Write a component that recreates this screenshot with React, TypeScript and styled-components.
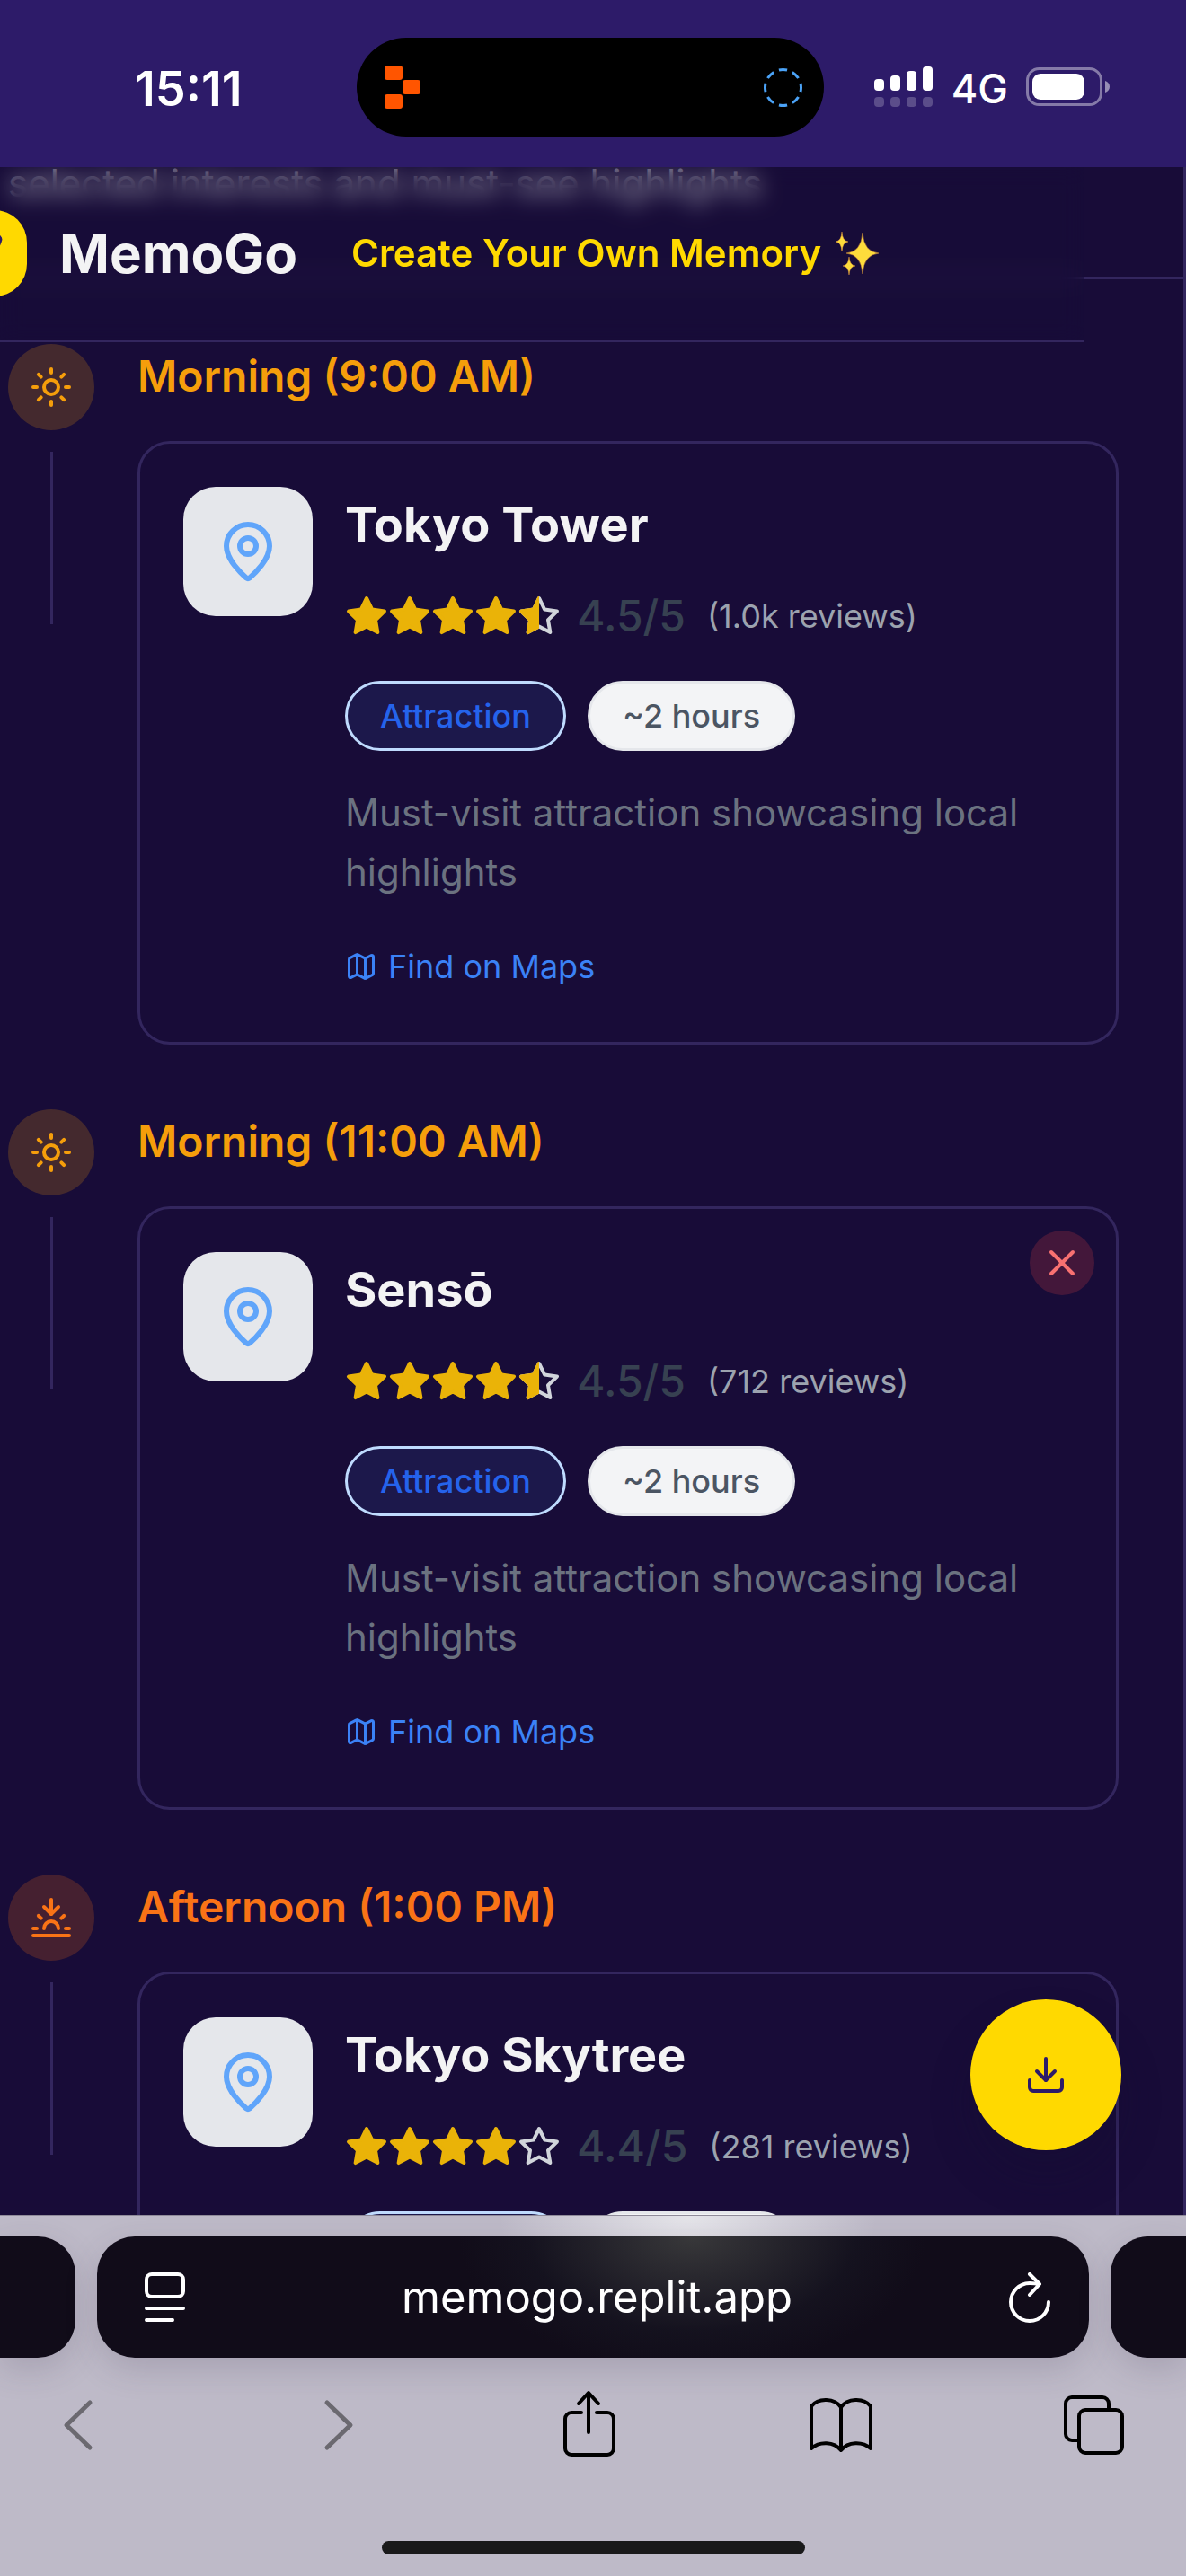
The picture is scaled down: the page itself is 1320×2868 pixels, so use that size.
import React from "react";
import styled, { createGlobalStyle } from "styled-components";
import { Download, Map as MapIcon, MapPin, Sun, Sunset, X } from "lucide-react";

const colors = {
  bar: "#2d1b69",
  page: "#180c38",
  line: "#33265e",
  text: "#f3f3f4",
  yellow: "#ffd900",
  amber: "#f59e0b",
  orange: "#f97316",
  star: "#eab308",
  starEmpty: "#d1d5db",
  chrome: "#bebac8",
  pill: "#110c19",
};

const GlobalStyle = createGlobalStyle`
  *, *::before, *::after { box-sizing: border-box; }
  body {
    margin: 0;
    background: ${colors.page};
    font-family: Inter, "Liberation Sans", sans-serif;
    -webkit-font-smoothing: antialiased;
  }
  h1, h2, h3, p { margin: 0; }
  button { font: inherit; border: 0; padding: 0; background: none; cursor: pointer; }
  svg { display: block; flex: none; }
`;

const Screen = styled.div`
  display: flex;
  flex-direction: column;
  height: 100vh;
  overflow: hidden;
  background: ${colors.page};
`;

/* ---------- status bar ---------- */

const StatusBar = styled.div`
  display: grid;
  grid-template-columns: 1fr 520px 1fr;
  align-items: center;
  flex: none;
  padding: 42px 84px 34px 78px;
  background: ${colors.bar};
  color: #fff;
`;

const Clock = styled.time`
  padding: 3px 0 0 72px;
  font-size: 54px;
  line-height: 60px;
  font-weight: 600;
`;

const Island = styled.div`
  display: flex;
  align-items: center;
  justify-content: space-between;
  height: 110px;
  padding: 0 24px 0 30px;
  border-radius: 55px;
  background: #000;
`;

const StatusIcons = styled.div`
  display: flex;
  align-items: center;
  justify-content: flex-end;
  gap: 20px;
`;

const Network = styled.span`
  padding-top: 3px;
  font-size: 45px;
  line-height: 54px;
  font-weight: 500;
`;

/* ---------- page header ---------- */

const Viewport = styled.main`
  position: relative;
  flex: 1;
  min-height: 0;
  overflow: hidden;
`;

const Header = styled.header`
  position: absolute;
  top: 0;
  left: 0;
  right: 114px;
  z-index: 2;
  display: flex;
  align-items: center;
  height: 195px;
  border-bottom: 3px solid ${colors.line};
  background: rgba(24, 12, 56, 0.3);
  backdrop-filter: blur(12px);
  overflow: hidden;
`;

const Logo = styled.div`
  flex: none;
  width: 96px;
  height: 96px;
  margin-left: -66px;
  border-radius: 36px;
  background: ${colors.yellow};
  overflow: hidden;
`;

const Brand = styled.h1`
  margin-left: 36px;
  font-size: 60px;
  line-height: 84px;
  font-weight: 700;
  color: ${colors.text};
`;

const Tagline = styled.p`
  display: flex;
  align-items: center;
  gap: 15px;
  margin-left: 60px;
  font-size: 42px;
  line-height: 60px;
  font-weight: 600;
  color: ${colors.yellow};
  white-space: nowrap;
`;

/* ---------- itinerary ---------- */

const DayCard = styled.section`
  border-right: 3px solid ${colors.line};
`;

const DayIntro = styled.div`
  height: 125px;
  padding-left: 9px;
  border-bottom: 3px solid ${colors.line};
  font-size: 42px;
  line-height: 36px;
  color: #e5e7eb;
`;

const Timeline = styled.div`
  display: flex;
  flex-direction: column;
  gap: 72px;
  padding: 72px 72px 72px 9px;
`;

const Row = styled.article`
  display: flex;
  gap: 48px;
`;

const Rail = styled.div`
  display: flex;
  flex-direction: column;
  align-items: center;
  gap: 24px;
  flex: none;
  width: 96px;
`;

const Period = styled.div<{ $tone: "amber" | "orange" }>`
  display: grid;
  place-items: center;
  width: 96px;
  height: 96px;
  border-radius: 50%;
  color: ${(p) => (p.$tone === "amber" ? colors.amber : colors.orange)};
  background: ${(p) =>
    p.$tone === "amber" ? "rgba(245, 158, 11, 0.2)" : "rgba(249, 115, 22, 0.2)"};
`;

const Connector = styled.div`
  width: 3px;
  height: 192px;
  background: ${colors.line};
`;

const Stop = styled.div`
  flex: 1;
  min-width: 0;
`;

const Time = styled.h2<{ $tone: "amber" | "orange" }>`
  margin-bottom: 36px;
  font-size: 48px;
  line-height: 72px;
  font-weight: 600;
  color: ${(p) => (p.$tone === "amber" ? colors.amber : colors.orange)};
`;

const Card = styled.div`
  position: relative;
  display: flex;
  align-items: flex-start;
  gap: 36px;
  padding: 48px;
  border: 3px solid ${colors.line};
  border-radius: 36px;
`;

const Thumb = styled.div`
  display: grid;
  place-items: center;
  flex: none;
  width: 144px;
  height: 144px;
  border-radius: 36px;
  background: #e5e7eb;
  color: #60a5fa;
`;

const Info = styled.div`
  flex: 1;
  min-width: 0;
`;

const Name = styled.h3`
  font-size: 54px;
  line-height: 84px;
  font-weight: 700;
  color: ${colors.text};
`;

const Rating = styled.div`
  display: flex;
  align-items: center;
  margin: 24px 0 36px;
`;

const Stars = styled.div`
  display: flex;
`;

const Score = styled.span`
  margin-left: 18px;
  font-size: 48px;
  line-height: 72px;
  font-weight: 500;
  color: #374151;
`;

const Reviews = styled.span`
  margin-left: 24px;
  font-size: 36px;
  line-height: 48px;
  color: #9ca3af;
`;

const Tags = styled.div`
  display: flex;
  gap: 24px;
  margin-bottom: 36px;
`;

const Tag = styled.span<{ $kind: "type" | "length" }>`
  padding: 12px 36px;
  border: 3px solid ${(p) => (p.$kind === "type" ? "#bfdbfe" : "#e5e7eb")};
  border-radius: 39px;
  background: ${(p) => (p.$kind === "type" ? "#1c184b" : "#f3f4f6")};
  color: ${(p) => (p.$kind === "type" ? "#2563eb" : "#4b5563")};
  font-size: 36px;
  line-height: 48px;
  font-weight: 500;
`;

const Summary = styled.p`
  margin-bottom: 36px;
  font-size: 42px;
  line-height: 66px;
  color: #6b7280;
`;

const MapLink = styled.a`
  display: inline-flex;
  align-items: center;
  gap: 12px;
  padding: 12px 0;
  vertical-align: top;
  font-size: 36px;
  line-height: 48px;
  color: #3b82f6;
  text-decoration: none;
`;

const Remove = styled.button`
  position: absolute;
  top: 24px;
  right: 24px;
  display: grid;
  place-items: center;
  width: 72px;
  height: 72px;
  border-radius: 50%;
  background: rgba(239, 68, 68, 0.2);
  color: #f87171;
`;

const SaveButton = styled.button`
  position: absolute;
  right: 72px;
  bottom: 72px;
  display: grid;
  place-items: center;
  width: 168px;
  height: 168px;
  border-radius: 50%;
  background: ${colors.yellow};
  color: ${colors.bar};
  box-shadow: 0 30px 45px rgba(20, 12, 50, 0.3);
`;

/* ---------- browser chrome ---------- */

const Browser = styled.footer`
  flex: none;
  padding: 23px 0 24px;
  border-top: 1px solid #8f8b99;
  background:
    radial-gradient(ellipse 210px 120px at 58% 0, rgba(234, 234, 238, 0.9), rgba(234, 234, 238, 0)),
    ${colors.chrome};
`;

const TabStrip = styled.div`
  display: flex;
  gap: 24px;
`;

const SideTab = styled.div<{ $side: "left" | "right" }>`
  flex: none;
  width: 84px;
  background: ${colors.pill};
  border-radius: ${(p) => (p.$side === "left" ? "0 42px 42px 0" : "42px 0 0 42px")};
  box-shadow: 0 12px 36px rgba(60, 50, 80, 0.18);
`;

const AddressBar = styled.div`
  display: flex;
  align-items: center;
  justify-content: space-between;
  flex: 1;
  height: 135px;
  padding: 0 42px 0 53px;
  border-radius: 42px;
  background:
    radial-gradient(ellipse 260px 150px at 60% 0, rgba(56, 56, 58, 1), rgba(24, 24, 36, 0.5) 70%, rgba(17, 12, 25, 0)),
    ${colors.pill};
  box-shadow: 0 12px 36px rgba(60, 50, 80, 0.18);
  color: #fff;
`;

const Address = styled.span`
  font-size: 49px;
  line-height: 60px;
`;

const Toolbar = styled.nav`
  display: flex;
  justify-content: space-between;
  padding: 27px 66px 0 51px;
`;

const Tool = styled.button`
  width: 72px;
  height: 96px;
  color: #000;
  &:disabled {
    color: #6b6970;
  }
`;

const HomeIndicator = styled.div`
  width: 471px;
  height: 15px;
  margin: 81px auto 0;
  border-radius: 8px;
  background: #1a1a1b;
`;

/* ---------- drawings ---------- */

const STAR =
  "12 2 15.09 8.26 22 9.27 17 14.14 18.18 21.02 12 17.77 5.82 21.02 7 14.14 2 9.27 8.91 8.26";

function Star({ fill }: { fill: number }) {
  return (
    <svg width="48" height="48" viewBox="0 0 24 24" strokeWidth="2" strokeLinejoin="round">
      {fill < 1 && <polygon points={STAR} fill="none" stroke={colors.starEmpty} />}
      {fill > 0 && (
        <svg x="0" y="0" width={24 * fill} height="24" viewBox={`0 0 ${24 * fill} 24`}>
          <polygon points={STAR} fill={colors.star} stroke={colors.star} />
        </svg>
      )}
    </svg>
  );
}

function ReplitMark() {
  return (
    <svg width="42" height="50" viewBox="0 0 42 50" fill="#ff5500">
      <rect x="1" y="1" width="20" height="16" rx="3" />
      <rect x="21" y="17" width="20" height="16" rx="3" />
      <rect x="1" y="33" width="20" height="16" rx="3" />
    </svg>
  );
}

function DashedRing() {
  return (
    <svg width="43" height="43" viewBox="0 0 43 43" fill="none">
      <circle
        cx="21.5"
        cy="21.5"
        r="20"
        stroke="#4ba3f7"
        strokeWidth="3"
        pathLength="80"
        strokeDasharray="6 4"
        strokeDashoffset="3"
      />
    </svg>
  );
}

function Signal() {
  const bars = [14, 10, 5, 0];
  return (
    <svg width="66" height="46" viewBox="0 0 66 46" fill="#fff">
      {bars.map((top, i) => (
        <g key={i}>
          <rect x={i * 18} y={top} width="11" height={27 - top} rx="4" />
          <rect x={i * 18} y="34" width="11" height="11" rx="4" opacity="0.22" />
        </g>
      ))}
    </svg>
  );
}

function Battery() {
  return (
    <svg width="94" height="44" viewBox="0 0 94 44">
      <rect x="1.5" y="1.5" width="82" height="40" rx="13" fill="none" stroke="#fff" strokeOpacity="0.42" strokeWidth="3" />
      <rect x="7" y="7" width="58" height="29" rx="9" fill="#fff" />
      <path d="M88 15c3 1 5 3.500 5 6.500s-2 5.500-5 6.500z" fill="#fff" opacity="0.5" />
    </svg>
  );
}

function Sparkles() {
  const spark = (x: number, y: number, w: number, h: number) => {
    const a = w * 0.08;
    const b = h * 0.06;
    return `M${x} ${y - h}Q${x + a} ${y - b} ${x + w} ${y}Q${x + a} ${y + b} ${x} ${y + h}Q${x - a} ${y + b} ${x - w} ${y}Q${x - a} ${y - b} ${x} ${y - h}Z`;
  };
  return (
    <svg width="51" height="60" viewBox="0 0 51 60" fill="#fddc3c" stroke="#e79a3c" strokeWidth="0.5">
      <path d={spark(31, 30, 18, 23)} />
      <path d={spark(8, 17, 7, 11)} />
      <path d={spark(16, 44, 7, 10)} />
    </svg>
  );
}

function ReaderIcon() {
  return (
    <svg width="46" height="56" viewBox="0 0 46 56" fill="none" stroke="#fff" strokeWidth="4" strokeLinecap="round">
      <rect x="2" y="2" width="41" height="25" rx="6" />
      <path d="M2 40h41M2 53h29" />
    </svg>
  );
}

function ReloadIcon() {
  return (
    <svg width="48" height="56" viewBox="0 0 48 56" fill="none" stroke="#fff" strokeWidth="4" strokeLinecap="round" strokeLinejoin="round">
      <path d="M34 13.500C31 12 28 12 24 12A21 21 0 0 0 3 33a21 21 0 0 0 42 0" />
      <path d="M24 2 35 13 24 25" />
    </svg>
  );
}

const toolSvg = {
  width: 72,
  height: 96,
  viewBox: "0 0 72 96",
  fill: "none",
  stroke: "currentColor",
  strokeWidth: 4,
  strokeLinecap: "round" as const,
  strokeLinejoin: "round" as const,
};

/* ---------- data ---------- */

type StopData = {
  time: string;
  tone: "amber" | "orange";
  icon: React.ReactNode;
  name: string;
  score: string;
  stars: number;
  reviews: string;
  removable?: boolean;
};

const stops: StopData[] = [
  { time: "Morning (9:00 AM)", tone: "amber", icon: <Sun size={48} />, name: "Tokyo Tower", score: "4.5/5", stars: 4.5, reviews: "(1.0k reviews)" },
  { time: "Morning (11:00 AM)", tone: "amber", icon: <Sun size={48} />, name: "Sensō", score: "4.5/5", stars: 4.5, reviews: "(712 reviews)", removable: true },
  { time: "Afternoon (1:00 PM)", tone: "orange", icon: <Sunset size={48} />, name: "Tokyo Skytree", score: "4.4/5", stars: 4, reviews: "(281 reviews)" },
];

function TimelineStop({ stop }: { stop: StopData }) {
  return (
    <Row>
      <Rail>
        <Period $tone={stop.tone}>{stop.icon}</Period>
        <Connector />
      </Rail>
      <Stop>
        <Time $tone={stop.tone}>{stop.time}</Time>
        <Card>
          <Thumb>
            <MapPin size={72} />
          </Thumb>
          <Info>
            <Name>{stop.name}</Name>
            <Rating>
              <Stars>
                {[0, 1, 2, 3, 4].map((i) => (
                  <Star key={i} fill={Math.max(0, Math.min(1, stop.stars - i))} />
                ))}
              </Stars>
              <Score>{stop.score}</Score>
              <Reviews>{stop.reviews}</Reviews>
            </Rating>
            <Tags>
              <Tag $kind="type">Attraction</Tag>
              <Tag $kind="length">~2 hours</Tag>
            </Tags>
            <Summary>Must-visit attraction showcasing local highlights</Summary>
            <MapLink href="#maps">
              <MapIcon size={36} />
              Find on Maps
            </MapLink>
          </Info>
          {stop.removable && (
            <Remove aria-label="Remove stop">
              <X size={48} />
            </Remove>
          )}
        </Card>
      </Stop>
    </Row>
  );
}

export default function App() {
  return (
    <Screen>
      <GlobalStyle />
      <StatusBar>
        <Clock>15:11</Clock>
        <Island>
          <ReplitMark />
          <DashedRing />
        </Island>
        <StatusIcons>
          <Signal />
          <Network>4G</Network>
          <Battery />
        </StatusIcons>
      </StatusBar>

      <Viewport>
        <Header>
          <Logo>
            <svg width="96" height="96" viewBox="0 0 96 96" fill="none" stroke={colors.bar} strokeWidth="6" strokeLinecap="round" strokeLinejoin="round">
              <path d="M27 42 61 30a3 3 0 0 1 4 4L50 70l-6-18z" />
            </svg>
          </Logo>
          <Brand>MemoGo</Brand>
          <Tagline>
            Create Your Own Memory
            <Sparkles />
          </Tagline>
        </Header>

        <DayCard>
          <DayIntro>selected interests and must-see highlights</DayIntro>
          <Timeline>
            {stops.map((stop) => (
              <TimelineStop key={stop.time} stop={stop} />
            ))}
          </Timeline>
        </DayCard>

        <SaveButton aria-label="Download itinerary">
          <Download size={48} />
        </SaveButton>
      </Viewport>

      <Browser>
        <TabStrip>
          <SideTab $side="left" />
          <AddressBar>
            <ReaderIcon />
            <Address>memogo.replit.app</Address>
            <ReloadIcon />
          </AddressBar>
          <SideTab $side="right" />
        </TabStrip>
        <Toolbar>
          <Tool aria-label="Back" disabled>
            <svg {...toolSvg} strokeWidth={5}>
              <path d="M49 23 23 48l26 25" />
            </svg>
          </Tool>
          <Tool aria-label="Forward" disabled>
            <svg {...toolSvg} strokeWidth={5}>
              <path d="M30 23 56 48 30 73" />
            </svg>
          </Tool>
          <Tool aria-label="Share">
            <svg {...toolSvg}>
              <path d="M30 34H19a7 7 0 0 0-7 7v33a7 7 0 0 0 7 7h40a7 7 0 0 0 7-7V41a7 7 0 0 0-7-7H47" />
              <path d="M38 56V13M27 24 38 12l11 12" />
            </svg>
          </Tool>
          <Tool aria-label="Bookmarks">
            <svg {...toolSvg}>
              <path d="M37 28c-7-10-25-11-33-1v47c9-8 25-8 33 2 8-10 24-10 33-2V27c-8-10-26-9-33 1zM37 28v48" />
            </svg>
          </Tool>
          <Tool aria-label="Tabs">
            <svg {...toolSvg}>
              <path d="M18 65h-7a7 7 0 0 1-7-7V24a7 7 0 0 1 7-7h34a7 7 0 0 1 7 7v7" />
              <rect x="19" y="31" width="48" height="48" rx="7" />
            </svg>
          </Tool>
        </Toolbar>
        <HomeIndicator />
      </Browser>
    </Screen>
  );
}
